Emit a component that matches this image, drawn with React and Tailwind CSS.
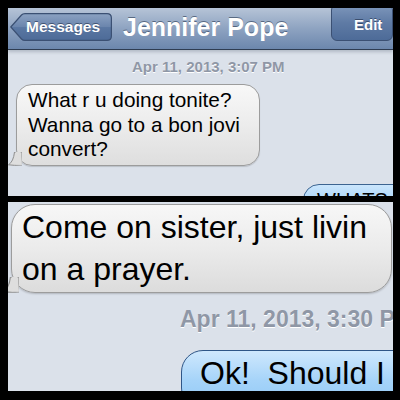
import React from 'react';

const font = { fontFamily: '"Liberation Sans", Arial, Helvetica, sans-serif' };

const BackButton = () => (
    <div className="relative ml-[2px] mt-[5px] h-[28px] w-[102px] shrink-0">
        <svg className="absolute inset-0" width="102" height="28" viewBox="0 0 102 28">
            <defs>
                <linearGradient id="backFill" x1="0" y1="0" x2="0" y2="1">
                    <stop offset="0" stopColor="#8ca2c2" />
                    <stop offset="0.5" stopColor="#6a85ad" />
                    <stop offset="0.52" stopColor="#5a77a2" />
                    <stop offset="1" stopColor="#4d6b98" />
                </linearGradient>
            </defs>
            <path
                d="M0.8 14 L11.5 2 Q12.8 0.6 15 0.6 L97 0.6 Q101.4 0.6 101.4 5 L101.4 23 Q101.4 27.4 97 27.4 L15 27.4 Q12.8 27.4 11.5 26 Z"
                fill="url(#backFill)"
                stroke="#3b5073"
                strokeWidth="1.2"
            />
        </svg>
        <div className="relative flex h-full items-center pl-[16px] text-[15.5px] font-bold text-white [text-shadow:0_-1px_0_rgba(30,45,70,0.6)]">
            Messages
        </div>
    </div>
);

// little tail at the bottom-left corner of the grey bubbles
const GrayTail = ({ size }) => (
    <svg className="absolute bottom-[-1px] left-[-9px]" width={size} height={size} viewBox="0 0 14 14">
        <path d="M14 0 L14 13 Q6 13.8 0.5 12.8 Q5.5 9.5 6.5 0 Z" fill="#dedede" stroke="#8e8e8e" strokeWidth="1" />
        <path d="M12.5 0 L14 12.9 L7.5 12.6 Q8.8 8 7.8 0 Z" fill="#dedede" />
    </svg>
);

export default function App() {
    return (
        <div className="flex h-[400px] w-[400px] flex-col gap-[6px] bg-black pb-[9px] pl-[8px] pr-[7px] pt-[8px]" style={font}>
            {/* Top screenshot */}
            <div className="flex h-[188px] flex-col overflow-hidden bg-[#dbe1ea]">
                <div className="flex h-[42px] shrink-0 items-start border-b border-[#2f3d52] bg-gradient-to-b from-[#b6c4d7] via-[#8ea3c1] to-[#6c87ad] shadow-[0_2px_3px_rgba(60,70,90,0.25)]">
                    <BackButton />
                    <div className="ml-[11px] mt-[6px] text-[25px] font-bold leading-[26px] text-white [text-shadow:0_-1px_0_rgba(40,55,80,0.6)]">
                        Jennifer Pope
                    </div>
                    <div className="ml-auto -mt-[4px] flex h-[37px] w-[62px] shrink-0 items-center rounded-[6px] border border-[#3b5073] bg-gradient-to-b from-[#7e97bb] via-[#5f7ba5] to-[#4d6b98] pl-[22px] pt-[6px] text-[15px] font-bold text-white [text-shadow:0_-1px_0_rgba(30,45,70,0.6)]">
                        Edit
                    </div>
                </div>

                <div className="ml-[124px] mt-[9px] text-[15px] font-bold leading-[15px] text-[#8f97a6] [text-shadow:0_1px_0_#ffffff]">
                    Apr 11, 2013, 3:07 PM
                </div>

                <div className="relative ml-[8px] mt-[10px] w-[244px] shrink-0 rounded-[16px] border border-[#9c9c9c] bg-gradient-to-b from-[#f8f8f8] via-[#ececec] to-[#dedede] pb-[3px] pl-[11px] pt-[3px] text-[20.8px] leading-[24.5px] text-black shadow-[0_1px_1px_rgba(0,0,0,0.15)]">
                    <GrayTail size={14} />
                    <div>What r u doing tonite?</div>
                    <div>Wanna go to a bon jovi</div>
                    <div>convert?</div>
                </div>

                <div className="ml-[295px] mt-[18px] h-[40px] w-[120px] shrink-0 rounded-[16px] border border-[#3c6491] bg-gradient-to-b from-[#cbe6fd] via-[#a5d3f8] to-[#8cc5f4] pl-[13px] pt-[3px] text-[20px] leading-[24px] text-black">
                    WHATS
                </div>
            </div>

            {/* Bottom zoomed screenshot */}
            <div className="flex h-[189px] flex-col overflow-hidden bg-[#dbe1ea]">
                <div className="relative ml-[3px] mt-[2px] h-[89px] w-[381px] shrink-0 rounded-[24px] border border-[#9c9c9c] bg-gradient-to-b from-[#f7f7f7] via-[#ebebeb] to-[#dcdcdc] pl-[10px] pt-[1px] text-[32px] leading-[42px] text-black shadow-[0_1px_2px_rgba(0,0,0,0.2)]">
                    <GrayTail size={16} />
                    <div>Come on sister, just livin</div>
                    <div>on a prayer.</div>
                </div>

                <div className="ml-[172px] mt-[15px] whitespace-nowrap text-[23px] font-bold leading-[23px] text-[#8f97a6] [text-shadow:0_1px_0_#ffffff]">
                    Apr 11, 2013, 3:30 PM
                </div>

                <div className="ml-[173px] mt-[19px] h-[60px] w-[240px] shrink-0 whitespace-pre rounded-[22px] border-[1.5px] border-[#2f5687] bg-gradient-to-b from-[#cfe8fd] via-[#a6d4f9] to-[#90c7f5] pl-[18px] pt-[1px] text-[32px] leading-[42px] text-black">
                    {'Ok!  Should I'}
                </div>
            </div>
        </div>
    );
}
